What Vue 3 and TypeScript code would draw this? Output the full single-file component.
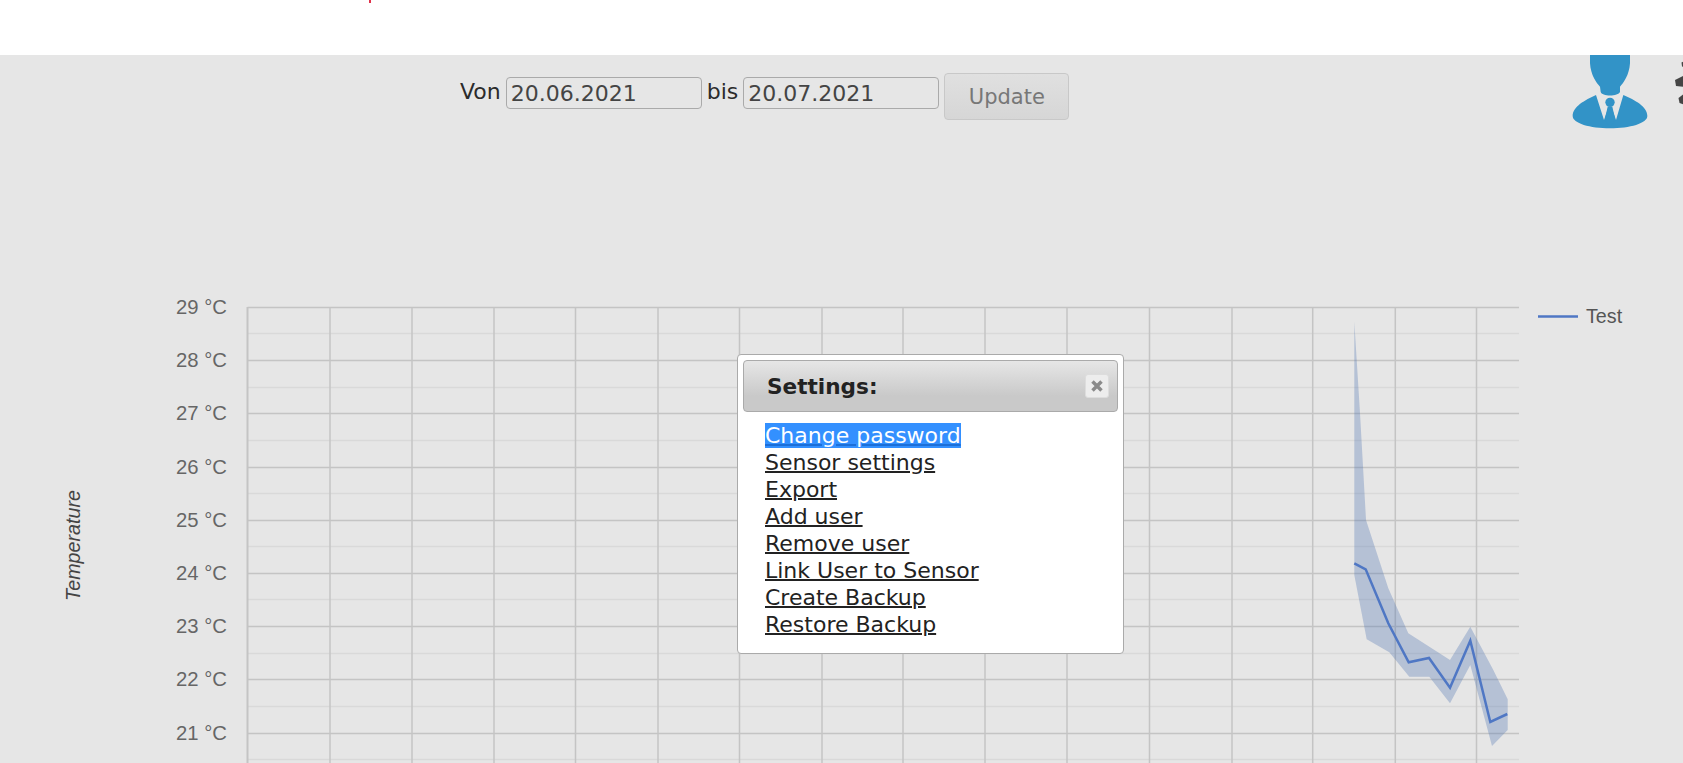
<script setup lang="ts">
interface Pt { x: number; y: number }

// chart geometry, page px
const chartTop = 55
const gridLeft = 247.5
const gridRight = 1519
const gridTop = 307
const rowH = 53.2
const columns = [330, 412, 494, 575.5, 658, 739.5, 822, 903, 985, 1067, 1149.5, 1232, 1312.7, 1395.3, 1476.5]
const temps = [29, 28, 27, 26, 25, 24, 23, 22, 21]

function majorY(i: number) {
  return Math.round(gridTop + i * rowH) + 0.5 - chartTop
}
function minorY(i: number) {
  return Math.round(gridTop + 26.4 + i * rowH) + 0.5 - chartTop
}

// points read from the reference in 3x crop coords
function crop(list: number[][]): string {
  return list
    .map(([x, y]): Pt => ({ x: 1300 + x / 3, y: 290 + y / 3 - chartTop }))
    .map(p => `${p.x.toFixed(1)},${p.y.toFixed(1)}`)
    .join(' ')
}

const line = crop([[163, 820], [197, 838], [265, 1000], [326, 1117], [387, 1104], [450, 1193], [511, 1052], [571, 1296], [622, 1272]])
const band = crop([
  [163, 95], [180, 370], [198, 690], [265, 895], [325, 1030], [450, 1110], [511, 1010], [580, 1140], [623, 1228],
  [623, 1320], [576, 1368], [511, 1125], [450, 1240], [388, 1160], [328, 1160], [268, 1087], [200, 1048], [163, 855],
])

const links = ['Change password', 'Sensor settings', 'Export', 'Add user', 'Remove user', 'Link User to Sensor', 'Create Backup', 'Restore Backup']
</script>

<template>
  <div class="page">
    <span class="speck"></span>
    <header class="topbar"></header>
    <main class="content">
      <div class="toolbar">
        <form class="range" @submit.prevent>
          <label for="from">Von</label>
          <input id="from" class="date" value="20.06.2021" />
          <label for="to">bis</label>
          <input id="to" class="date" value="20.07.2021" />
          <button class="update" type="button">Update</button>
        </form>
      </div>

      <svg class="chart" width="1683" height="708" viewBox="0 0 1683 708">
        <g class="grid-minor">
          <line v-for="(t, i) in temps" :key="'m' + t" :x1="gridLeft" :x2="gridRight" :y1="minorY(i)" :y2="minorY(i)" />
        </g>
        <g class="grid-major">
          <line v-for="(t, i) in temps" :key="'h' + t" :x1="gridLeft" :x2="gridRight" :y1="majorY(i)" :y2="majorY(i)" />
          <line :x1="gridLeft" :x2="gridLeft" :y1="gridTop - chartTop" y2="708" class="axis" />
          <line v-for="c in columns" :key="c" :x1="c" :x2="c" :y1="gridTop - chartTop" y2="708" />
        </g>
        <polygon :points="band" fill="#5a7bb5" fill-opacity="0.35" />
        <polyline :points="line" fill="none" stroke="#4f77c4" stroke-width="2.5" />
        <text
          v-for="(t, i) in temps"
          :key="t"
          class="tick"
          x="227"
          :y="majorY(i) + 6"
          text-anchor="end"
        >{{ t }} °C</text>
        <text class="axis-title" transform="translate(80 546) rotate(-90)">Temperature</text>
        <line x1="1538" x2="1578" y1="261.5" y2="261.5" stroke="#4f77c4" stroke-width="2.5" />
        <text class="legend" x="1586" y="268">Test</text>
      </svg>

      <!-- user + gear, cut by the top bar -->
      <svg class="user" viewBox="0 0 429 300" width="143" height="100">
        <g fill="#3293c7">
          <path d="M150 0L270 0L270 70C268 105 250 130 240 140L240 155C235 170 185 170 182 155L180 140C170 130 152 105 150 70Z" />
          <path d="M168 165L192 240L204 205L216 205L228 240L250 165C285 180 322 200 322 228C322 250 270 265 210 265C150 265 98 250 98 228C98 200 135 180 168 165Z" />
          <circle cx="210" cy="187" r="14" />
          <path d="M203 200L194 240L210 262L226 240L217 200Z" />
        </g>
      </svg>
      <svg class="gear" viewBox="0 0 10 50" width="10" height="50">
        <g fill="#454545">
          <path d="M6.500 2.500L10 1L10 7L7 6.500Z" />
          <path d="M10 15L0 20L1 26L10 27Z" />
          <path d="M10 33L3.500 38L4.500 43L10 45Z" />
        </g>
      </svg>
    </main>

    <section class="dialog">
      <div class="dialog-title">
        <span>Settings:</span>
        <button class="close" type="button" aria-label="close">
          <svg viewBox="0 0 12 12" width="12" height="12">
            <path d="M1.500 1.500L10.500 10.500M10.500 1.500L1.500 10.500" stroke="#8a8a8a" stroke-width="3.500" fill="none" />
          </svg>
        </button>
      </div>
      <ul class="dialog-links">
        <li v-for="(l, i) in links" :key="l">
          <a href="#" :class="{ picked: i === 0 }" @click.prevent>{{ l }}</a>
        </li>
      </ul>
    </section>
  </div>
</template>

<style>
html, body { margin: 0; background: #fff; overflow: hidden; }
</style>

<style scoped>
.page {
  position: relative;
  width: 1683px;
  height: 763px;
  overflow: hidden;
  font-family: "DejaVu Sans", Verdana, sans-serif;
  color: #222;
}
.speck {
  position: absolute;
  left: 369px;
  top: 0;
  width: 2px;
  height: 3px;
  background: #e0324b;
}
.topbar { height: 55px; background: #fff; }
.content {
  position: relative;
  height: 708px;
  overflow: hidden;
  background: #e6e6e6;
}
.toolbar { display: flex; padding: 18px 0 0 460px; position: relative; z-index: 1; }
.range { display: flex; align-items: flex-start; gap: 5px; font-size: 22px; }
.range label { line-height: 30px; margin-top: 4px; color: #2b2b2b; }
.date {
  box-sizing: border-box;
  width: 196px;
  height: 32px;
  margin-top: 4px;
  padding: 0 4px;
  border: 1px solid #aaa;
  border-radius: 4px;
  background: #e6e6e6;
  color: #444;
  font: 22px "DejaVu Sans", Verdana, sans-serif;
}
.update {
  box-sizing: border-box;
  width: 125px;
  height: 47px;
  margin-top: 0;
  border: 1px solid #c8c8c8;
  border-radius: 4px;
  background: linear-gradient(#e0e0e0, #d6d6d6);
  color: #777;
  font: 21px "DejaVu Sans", Verdana, sans-serif;
}
.user { position: absolute; left: 1540px; top: -15px; }
.gear { position: absolute; left: 1675px; top: 5px; }
.chart { position: absolute; left: 0; top: 0; }
.grid-minor line { stroke: #d9d9d9; stroke-width: 1.500; }
.grid-major line { stroke: #c4c4c4; stroke-width: 1.500; }
.grid-major .axis { stroke-width: 2; }
.tick { font: 20.300px "Liberation Sans", Arial, sans-serif; fill: #666; }
.axis-title { font: italic 19.700px "Liberation Sans", Arial, sans-serif; fill: #444; }
.legend { font: 19.700px "Liberation Sans", Arial, sans-serif; fill: #555; }
.dialog {
  position: absolute;
  left: 737px;
  top: 354px;
  box-sizing: border-box;
  width: 387px;
  height: 300px;
  padding: 5px;
  background: #fff;
  border: 1px solid #aaa;
  border-radius: 4px;
}
.dialog-title {
  display: flex;
  align-items: center;
  justify-content: space-between;
  box-sizing: border-box;
  height: 52px;
  padding: 0 8px 0 23px;
  border: 1px solid #aaa;
  border-radius: 4px;
  background: linear-gradient(#e6e6e6, #c9c9c9 70%);
  color: #222;
  font-size: 21.600px;
  font-weight: 700;
}
.close {
  display: flex;
  align-items: center;
  justify-content: center;
  box-sizing: border-box;
  width: 24px;
  height: 24px;
  padding: 0;
  border: 1px solid #ddd;
  border-radius: 3px;
  background: #ededed;
}
.dialog-links {
  list-style: none;
  margin: 0;
  padding: 10px 0 0 22px;
  font-size: 22px;
  line-height: 27px;
}
.dialog-links a { color: #222; text-decoration-thickness: 2px; }
.dialog-links a.picked { background: #3390ff; color: #fff; text-decoration-color: #1c6fd8; }
</style>
